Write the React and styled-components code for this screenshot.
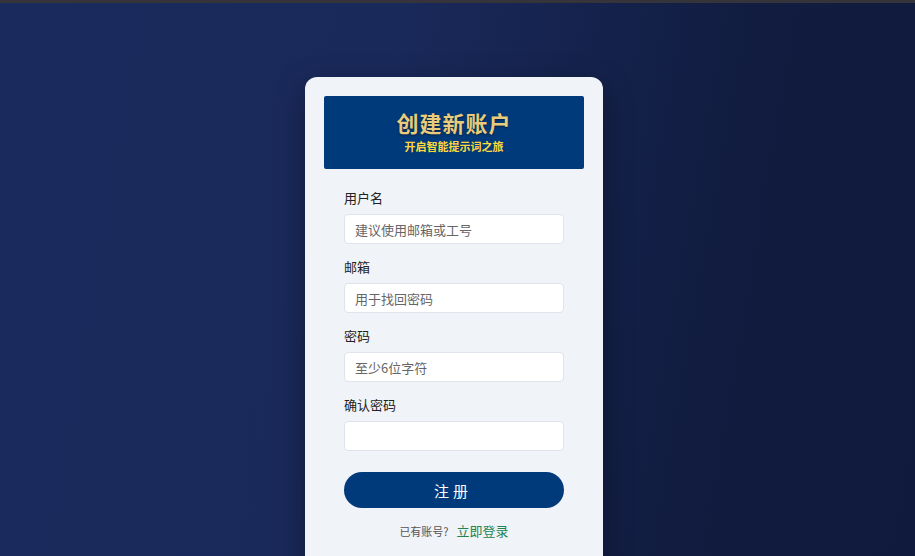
import React from 'react';
import styled, { createGlobalStyle } from 'styled-components';

const GlobalStyle = createGlobalStyle`
  html, body {
    margin: 0;
    padding: 0;
    height: 100%;
    overflow: hidden;
  }
  body {
    font-family: "Noto Sans CJK SC", "Noto Sans", sans-serif;
    background: #141f47;
  }
`;

const Page = styled.div`
  height: 556px;
  border-top: 3px solid #34343a;
  box-sizing: border-box;
  background: linear-gradient(100deg, #1b2a5c 0%, #19295a 40%, #111c40 75%, #0f1a3c 100%);
  display: flex;
  justify-content: center;
  padding: 74px 7px 0 0;
`;

const Card = styled.div`
  width: 298px;
  height: 520px;
  box-sizing: border-box;
  background: #f0f3f7;
  border-radius: 12px;
  padding: 19px;
  box-shadow: 0 10px 30px rgba(0, 0, 0, 0.35);
`;

const Banner = styled.div`
  height: 73px;
  box-sizing: border-box;
  padding-bottom: 5px;
  background: #003a7a;
  border-radius: 2px;
  display: flex;
  flex-direction: column;
  align-items: center;
  justify-content: center;
`;

const Title = styled.h1`
  margin: 0;
  font-size: 22px;
  line-height: 28px;
  font-weight: 700;
  color: #e9cb7c;
  letter-spacing: 1px;
  text-shadow: 0 1px 2px rgba(0, 0, 0, 0.5);
`;

const Subtitle = styled.p`
  margin: 3px 0 0;
  font-size: 11px;
  line-height: 14px;
  font-weight: 700;
  color: #ffd83a;
`;

const Form = styled.form`
  padding: 20px 20px 0;
  display: flex;
  flex-direction: column;
`;

const Field = styled.div`
  display: flex;
  flex-direction: column;
  margin-bottom: 14px;
`;

const Label = styled.label`
  font-size: 13px;
  line-height: 18px;
  color: #222;
  margin-bottom: 7px;
`;

const Input = styled.input`
  height: 30px;
  box-sizing: border-box;
  border: 1px solid #dfe3ea;
  border-radius: 4px;
  background: #fff;
  padding: 0 10px;
  font-family: inherit;
  font-size: 13px;
  color: #333;
  outline: none;
  &::placeholder {
    color: #666;
  }
`;

const Submit = styled.button`
  margin-top: 7px;
  height: 36px;
  border: none;
  border-radius: 18px;
  background: #003a7a;
  color: #fff;
  font-family: inherit;
  font-size: 15px;
  letter-spacing: 4px;
  padding-left: 4px;
  cursor: pointer;
`;

const Footer = styled.p`
  margin: 12px 0 0;
  text-align: center;
  font-size: 11px;
  line-height: 22px;
  color: #555;
`;

const LoginLink = styled.a`
  margin-left: 8px;
  font-size: 13px;
  color: #23834f;
  text-decoration: none;
`;

const fields = [
  { label: '用户名', placeholder: '建议使用邮箱或工号', type: 'text' },
  { label: '邮箱', placeholder: '用于找回密码', type: 'email' },
  { label: '密码', placeholder: '至少6位字符', type: 'password' },
  { label: '确认密码', placeholder: '', type: 'password' },
];

export default function App() {
  return (
    <>
      <GlobalStyle />
      <Page>
        <Card>
          <Banner>
            <Title>创建新账户</Title>
            <Subtitle>开启智能提示词之旅</Subtitle>
          </Banner>
          <Form onSubmit={(e) => e.preventDefault()}>
            {fields.map((f, key) => (
              <Field key={key}>
                <Label>{f.label}</Label>
                <Input type={f.type} placeholder={f.placeholder} />
              </Field>
            ))}
            <Submit type="submit">注册</Submit>
            <Footer>
              已有账号?
              <LoginLink href="#">立即登录</LoginLink>
            </Footer>
          </Form>
        </Card>
      </Page>
    </>
  );
}
